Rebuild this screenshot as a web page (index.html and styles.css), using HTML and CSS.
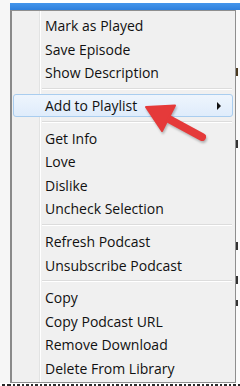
FILE: index.html
```html
<!DOCTYPE html>
<html>
<head>
<meta charset="utf-8">
<link rel="stylesheet" href="styles.css">
</head>
<body>
<div class="page">
  <div class="top">
    <div class="top-left"></div>
    <div class="top-blue"></div>
  </div>
  <div class="mid">
    <div class="left"></div>
    <div class="menu">
      <div class="item">Mark as Played</div>
      <div class="item">Save Episode</div>
      <div class="item">Show Description</div>
      <div class="sep"></div>
      <div class="item hl"><span class="label">Add to Playlist</span><span class="sub"></span></div>
      <div class="sep"></div>
      <div class="item">Get Info</div>
      <div class="item">Love</div>
      <div class="item">Dislike</div>
      <div class="item">Uncheck Selection</div>
      <div class="sep"></div>
      <div class="item">Refresh Podcast</div>
      <div class="item">Unsubscribe Podcast</div>
      <div class="sep"></div>
      <div class="item">Copy</div>
      <div class="item">Copy Podcast URL</div>
      <div class="item">Remove Download</div>
      <div class="item">Delete From Library</div>
    </div>
    <div class="right"></div>
  </div>
  <div class="bottom"></div>
  <svg class="arrow" width="240" height="386" viewBox="0 0 240 386">
    <line x1="166" y1="117.5" x2="202" y2="137" stroke="#e53a3a" stroke-width="8" stroke-linecap="round"/>
    <polygon points="146,107 175,105.5 162,131" fill="#e53a3a" stroke="#e53a3a" stroke-width="2" stroke-linejoin="round"/>
  </svg>
</div>
</body>
</html>
```
FILE: styles.css
```css
html, body {
  margin: 0;
  padding: 0;
  background: #ffffff;
}
.page {
  position: relative;
  width: 240px;
  height: 386px;
  overflow: hidden;
  display: flex;
  flex-direction: column;
  font-family: "Open Sans", "Noto Sans", sans-serif;
}
.top {
  display: flex;
  height: 10px;
  flex: none;
}
.top-left {
  width: 10px;
  background: #f7f7f7;
}
.top-blue {
  flex: 1;
  margin-top: 3px;
  background: linear-gradient(#4496ec, #2f80dc);
}
.mid {
  display: flex;
  flex: none;
  height: 373px;
}
.left {
  width: 10px;
  background: #f6f6f6;
}
.menu {
  width: 223px;
  border: 1px solid #8f8f8f;
  border-left: 2px solid #8a8a8a;
  padding: 3px 0 1.6px 0;
  background: linear-gradient(to right, #f0f0f0 0 27px, #e2e3e3 27px 28px, #ffffff 28px 29px, #f0f0f0 29px);
  color: #111;
  font-size: 14px;
}
.item {
  height: 23.6px;
  display: flex;
  align-items: center;
  padding-left: 33px;
  box-sizing: border-box;
  white-space: nowrap;
}
.item.hl {
  margin: 0 2px 0 1px;
  padding-left: 31px;
  border: 1px solid #a9cdef;
  border-radius: 3px;
  background: linear-gradient(#eef5fd, #dfecfb);
}
.label {
  flex: 1;
}
.sub {
  width: 0;
  height: 0;
  border-top: 4px solid transparent;
  border-bottom: 4px solid transparent;
  border-left: 4px solid #111;
  margin-right: 11px;
}
.sep {
  height: 9px;
  margin: 0 3px 0 30px;
  display: flex;
  flex-direction: column;
  justify-content: center;
}
.sep::before {
  content: "";
  display: block;
  height: 1px;
  background: #dcdcdc;
  border-bottom: 1px solid #ffffff;
}
.right {
  flex: 1;
  background:
    linear-gradient(#fbfbfb 0 58px, #4a3a20 58px 66px, #fbfbfb 66px 130px, #333 130px 138px, #fbfbfb 138px 232px, #333 232px 240px, #fbfbfb 240px 266px, #333 266px 274px, #fbfbfb 274px 290px, #333 290px 296px, #fbfbfb 296px);
  background-size: 2px 100%;
  background-repeat: no-repeat;
  background-color: #fbfbfb;
}
.bottom {
  flex: 1;
  background:
    repeating-linear-gradient(to right, #2a2a2a 0 3px, #fff 3px 5px, #2a2a2a 5px 7px, #fff 7px 9px);
  background-position: 8px 0;
  border-top: 1px solid #fff;
}
.arrow {
  position: absolute;
  left: 0;
  top: 0;
  pointer-events: none;
  filter: drop-shadow(1px 2px 1px rgba(0,0,0,0.25));
}
```
